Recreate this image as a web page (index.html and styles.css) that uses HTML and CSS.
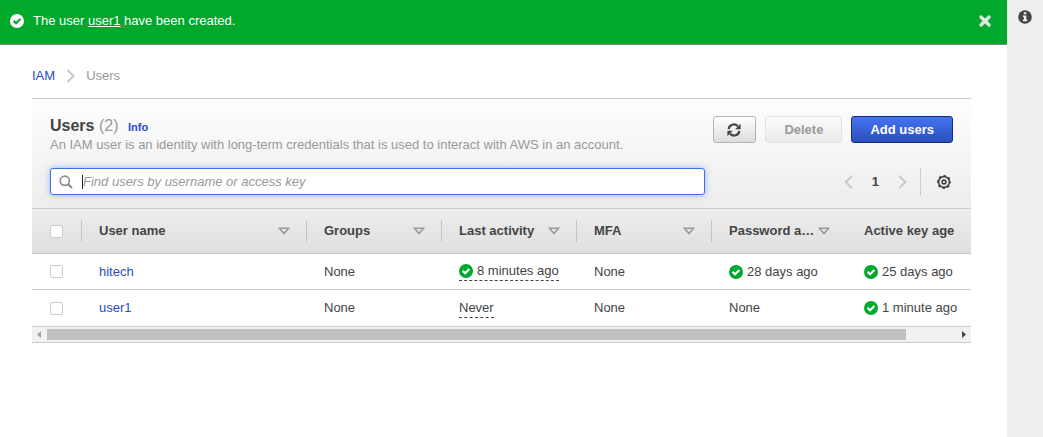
FILE: index.html
```html
<!DOCTYPE html>
<html lang="en">
<head>
    <meta charset="UTF-8">
    <meta name="viewport" content="width=device-width, initial-scale=1.0">
    <title>IAM - Users</title>
    <link rel="stylesheet" href="styles.css">
</head>
<body>
    <!-- Shared icons -->
    <svg class="sprite" aria-hidden="true">
        <symbol id="check" viewBox="0 0 14 14">
            <circle cx="7" cy="7" r="7" fill="currentColor"/>
            <path class="tick" d="M3.6 6.9 L6.1 9.3 L10.4 5" fill="none" stroke-width="2.2"/>
        </symbol>
        <symbol id="sort" viewBox="0 0 12 8">
            <path d="M1.4 1.2 H10.6 L6 6.6 Z" fill="none" stroke="currentColor" stroke-width="1.6"/>
        </symbol>
    </svg>

    <div class="app">
        <main>
            <div class="flash" role="status">
                <svg class="icon"><use href="#check"/></svg>
                <p>The user <a href="#user1">user1</a> have been created.</p>
                <button type="button" class="plain" aria-label="Dismiss">
                    <svg width="12" height="12" viewBox="0 0 12 12"><path d="M2 2 L10 10 M10 2 L2 10" stroke="#dfe8e0" stroke-width="3.4" stroke-linecap="round"/></svg>
                </button>
            </div>

            <div class="content">
                <nav class="breadcrumb" aria-label="Breadcrumb">
                    <a href="#iam">IAM</a>
                    <svg width="9" height="14" viewBox="0 0 9 14"><path d="M1.5 1 L7.5 7 L1.5 13" fill="none" stroke="#c8c8c8" stroke-width="2"/></svg>
                    <span>Users</span>
                </nav>

                <section class="panel">
                    <div class="panel-head">
                        <div class="title-row">
                            <div class="title">
                                <h1>Users <span>(2)</span> <a href="#info">Info</a></h1>
                                <p>An IAM user is an identity with long-term credentials that is used to interact with AWS in an account.</p>
                            </div>
                            <div class="actions">
                                <button type="button" class="btn refresh" aria-label="Refresh">
                                    <svg width="14" height="14" viewBox="0 0 14 14">
                                        <path d="M1.6 6 A5.3 5.3 0 0 1 10.8 3.3 M12.4 8 A5.3 5.3 0 0 1 3.2 10.7" fill="none" stroke="#444" stroke-width="2.2"/>
                                        <path d="M13.6 0.8 V6.2 H8.2 Z M0.4 13.2 V7.8 H5.8 Z" fill="#444"/>
                                    </svg>
                                </button>
                                <button type="button" class="btn" disabled>Delete</button>
                                <button type="button" class="btn primary">Add users</button>
                            </div>
                        </div>

                        <div class="filter-row">
                            <div class="search">
                                <svg width="14" height="14" viewBox="0 0 14 14"><circle cx="5.8" cy="5.8" r="4.6" fill="none" stroke="#8c8c8c" stroke-width="1.7"/><path d="M9.2 9.2 L13 13" stroke="#8c8c8c" stroke-width="2"/></svg>
                                <span class="caret"></span>
                                <input type="text" placeholder="Find users by username or access key" aria-label="Find users by username or access key">
                            </div>
                            <div class="pager">
                                <button type="button" class="plain" aria-label="Previous page">
                                    <svg width="9" height="14" viewBox="0 0 9 14"><path d="M7.8 1 L1.6 7 L7.8 13" fill="none" stroke="#c8c8c8" stroke-width="1.8"/></svg>
                                </button>
                                <b>1</b>
                                <button type="button" class="plain" aria-label="Next page">
                                    <svg width="9" height="14" viewBox="0 0 9 14"><path d="M1.2 1 L7.4 7 L1.2 13" fill="none" stroke="#c8c8c8" stroke-width="1.8"/></svg>
                                </button>
                                <button type="button" class="plain settings" aria-label="Preferences">
                                    <svg width="14" height="14" viewBox="0 0 14 14" fill="none" stroke="#444">
                                        <circle cx="7" cy="7" r="5.4" stroke-width="1.6"/>
                                        <circle cx="7" cy="7" r="6.4" stroke-width="1.2" stroke-dasharray="2.51 2.51" stroke-dashoffset="1.25"/>
                                        <circle cx="7" cy="7" r="1.9" stroke-width="1.6"/>
                                    </svg>
                                </button>
                            </div>
                        </div>
                    </div>

                    <div class="table-wrap">
                        <table>
                            <colgroup>
                                <col class="col-check"><col class="col-name"><col class="col-std"><col class="col-std"><col class="col-std"><col class="col-std"><col class="col-key">
                            </colgroup>
                            <thead>
                                <tr>
                                    <th class="check"><input type="checkbox" aria-label="Select all users"></th>
                                    <th><div><span>User name</span><svg><use href="#sort"/></svg></div></th>
                                    <th><div><span>Groups</span><svg><use href="#sort"/></svg></div></th>
                                    <th><div><span>Last activity</span><svg><use href="#sort"/></svg></div></th>
                                    <th><div><span>MFA</span><svg><use href="#sort"/></svg></div></th>
                                    <th><div><span>Password a…</span><svg><use href="#sort"/></svg></div></th>
                                    <th><div><span>Active key age</span><svg><use href="#sort"/></svg></div></th>
                                </tr>
                            </thead>
                            <tbody>
                                <tr>
                                    <td class="check"><input type="checkbox" aria-label="Select hitech"></td>
                                    <td><a href="#hitech">hitech</a></td>
                                    <td>None</td>
                                    <td><span class="status dashed"><svg class="icon"><use href="#check"/></svg>8 minutes ago</span></td>
                                    <td>None</td>
                                    <td><span class="status"><svg class="icon"><use href="#check"/></svg>28 days ago</span></td>
                                    <td><span class="status"><svg class="icon"><use href="#check"/></svg>25 days ago</span></td>
                                </tr>
                                <tr>
                                    <td class="check"><input type="checkbox" aria-label="Select user1"></td>
                                    <td><a href="#user1">user1</a></td>
                                    <td>None</td>
                                    <td><span class="status dashed">Never</span></td>
                                    <td>None</td>
                                    <td>None</td>
                                    <td><span class="status"><svg class="icon"><use href="#check"/></svg>1 minute ago</span></td>
                                </tr>
                            </tbody>
                        </table>
                    </div>

                    <div class="scrollbar" aria-hidden="true">
                        <svg width="15" height="15" viewBox="0 0 15 15"><path d="M9 4 V11 L5 7.5 Z" fill="#a3a3a3"/></svg>
                        <div class="track"><div class="thumb"></div></div>
                        <svg width="15" height="15" viewBox="0 0 15 15"><path d="M6 4 V11 L10 7.5 Z" fill="#444"/></svg>
                    </div>
                </section>
            </div>
        </main>

        <aside>
            <button type="button" class="plain" aria-label="Open help panel">
                <svg width="14" height="14" viewBox="0 0 14 14"><circle cx="7" cy="7" r="6.8" fill="#444"/><path d="M5.8 2.2 H8.3 V4.3 H5.8 Z M5 5.5 H8.3 V9.6 H9.3 V11.2 H4.9 V9.6 H5.9 V7 H5 Z" fill="#eee"/></svg>
            </button>
        </aside>
    </div>
</body>
</html>
```
FILE: styles.css
```css
* {
    margin: 0;
    padding: 0;
    box-sizing: border-box;
}

body {
    font-family: "Liberation Sans", Arial, sans-serif;
    font-size: 13px;
    line-height: 18px;
    color: #444;
    background: #fff;
}

a {
    color: #2a4cc5;
    text-decoration: none;
}

svg {
    display: block;
    flex: none;
}

.sprite {
    position: absolute;
    width: 0;
    height: 0;
}

.icon {
    --tick: #fff;
    width: 14px;
    height: 14px;
    color: #00a82d;
}

.tick {
    stroke: var(--tick);
}

.plain {
    border: none;
    background: none;
    cursor: pointer;
}

.app {
    display: flex;
    min-height: 100vh;
}

main {
    flex: 1;
    min-width: 0;
}

/* Help panel strip */
aside {
    width: 36px;
    padding: 10px 0 0 11px;
    background: #eee;
}

/* Success message */
.flash {
    display: flex;
    align-items: center;
    gap: 9px;
    height: 45px;
    padding: 0 16px 3px 10px;
    background: #00a82b;
    border-bottom: 1px solid #7c8c80;
    color: #fff;
}

.flash p {
    flex: 1;
}

.flash a {
    color: #fff;
    text-decoration: underline;
}

.flash .icon {
    --tick: #00a82b;
    color: #fff;
}

.content {
    padding: 22px 36px 0 32px;
}

.breadcrumb {
    display: flex;
    align-items: center;
    gap: 11px;
    margin-bottom: 13px;
    color: #999;
}

/* Panel header */
.panel {
    border-top: 1px solid #ccc;
}

.panel-head {
    padding: 17px 18px 13px;
    background: linear-gradient(#fefefe, #ededed);
}

.title-row,
.filter-row {
    display: flex;
    justify-content: space-between;
}

h1 {
    font-size: 16px;
    line-height: 20px;
}

h1 span {
    font-weight: normal;
    color: #999;
}

h1 a {
    margin-left: 5px;
    font-size: 11px;
    line-height: 11px;
}

.title p {
    color: #999;
}

.actions {
    display: flex;
    gap: 9px;
}

.btn {
    height: 27px;
    padding: 0 18px;
    font: bold 13px/18px "Liberation Sans", Arial, sans-serif;
    color: #444;
    background: linear-gradient(#fff, #ddd);
    border: 1px solid #b3b3b3;
    border-radius: 3px;
}

.btn.refresh {
    width: 43px;
    padding: 0 13px;
}

.btn:disabled {
    color: #999;
    background: linear-gradient(#fbfbfb, #ebebeb);
    border-color: #e2e2e2;
}

.btn.primary {
    color: #fff;
    background: linear-gradient(#4474ef, #2c4fc0);
    border-color: #13307c;
}

.filter-row {
    margin-top: 14px;
    align-items: center;
}

.search {
    display: flex;
    align-items: center;
    flex: 0 1 655px;
    height: 27px;
    padding-left: 8px;
    background: #fff;
    border: 1px solid #3b73e6;
    border-radius: 3px;
    box-shadow: 0 0 6px rgba(59, 115, 230, 0.5);
}

.caret {
    width: 1px;
    height: 14px;
    margin-left: 9px;
    background: #222;
}

.search input {
    flex: 1;
    min-width: 0;
    border: none;
    outline: none;
    background: none;
    font: 13px/18px "Liberation Sans", Arial, sans-serif;
}

.search input::placeholder {
    color: #999;
    font-style: italic;
}

.pager {
    display: flex;
    align-items: center;
    gap: 19px;
}

.pager .settings {
    height: 27px;
    padding: 0 2px 0 16px;
    margin-left: -6px;
    border-left: 1px solid #ccc;
}

/* Users table */
.table-wrap {
    overflow: hidden;
    border-top: 1px solid #ccc;
}

table {
    width: 995px;
    table-layout: fixed;
    border-collapse: separate;
    border-spacing: 0;
}

.col-check {
    width: 49px;
}

.col-name {
    width: 225px;
}

.col-std {
    width: 135px;
}

.col-key {
    width: 181px;
}

th {
    height: 45px;
    text-align: left;
    background: linear-gradient(#ededed, #dfdfdf);
    border-bottom: 1px solid #c4c4c4;
}

th div {
    display: flex;
    align-items: center;
    height: 22px;
    padding: 0 16px 0 17px;
    border-left: 1px solid #c4c4c4;
}

th:last-child div {
    border-left: none;
    padding-left: 18px;
}

th span {
    flex: 1;
    overflow: hidden;
    text-overflow: ellipsis;
    white-space: nowrap;
}

th svg {
    width: 12px;
    height: 8px;
    margin-left: 2px;
    color: #999;
}

td {
    height: 36px;
    padding: 0 0 0 18px;
    border-bottom: 1px solid #ccc;
}

tr:last-child td {
    height: 37px;
}

.check {
    padding-left: 18px;
}

input[type="checkbox"] {
    appearance: none;
    display: block;
    width: 13px;
    height: 13px;
    background: #fff;
    border: 1px solid #ccc;
    border-radius: 2px;
}

.status {
    display: flex;
    align-items: center;
    gap: 4px;
    width: max-content;
}

.dashed {
    border-bottom: 1px dashed #444;
}

/* Horizontal scrollbar under the table */
.scrollbar {
    display: flex;
    height: 16px;
    background: #f1f1f1;
    border-bottom: 1px solid #ccc;
}

.track {
    flex: 1;
    padding: 2px 0;
}

.thumb {
    width: 94.5%;
    height: 11px;
    background: #c1c1c1;
}
```
